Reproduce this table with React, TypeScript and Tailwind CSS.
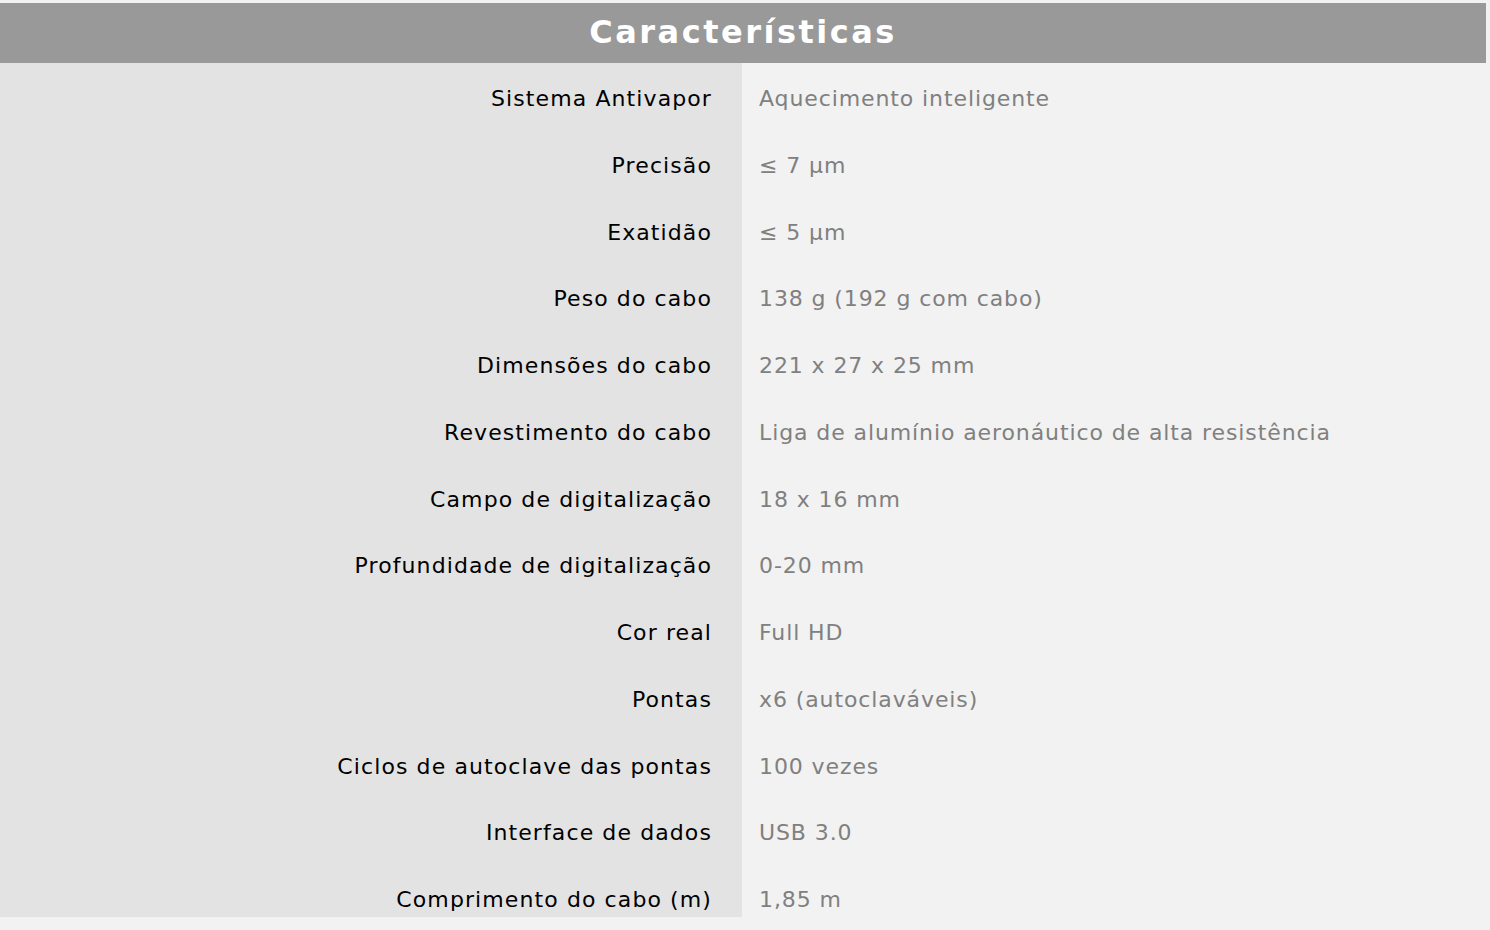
export default function App() {
  const specs = [
    { label: "Sistema Antivapor", value: "Aquecimento inteligente" },
    { label: "Precisão", value: "≤ 7 μm" },
    { label: "Exatidão", value: "≤ 5 μm" },
    { label: "Peso do cabo", value: "138 g (192 g com cabo)" },
    { label: "Dimensões do cabo", value: "221 x 27 x 25 mm" },
    { label: "Revestimento do cabo", value: "Liga de alumínio aeronáutico de alta resistência" },
    { label: "Campo de digitalização", value: "18 x 16 mm" },
    { label: "Profundidade de digitalização", value: "0-20 mm" },
    { label: "Cor real", value: "Full HD" },
    { label: "Pontas", value: "x6 (autoclaváveis)" },
    { label: "Ciclos de autoclave das pontas", value: "100 vezes" },
    { label: "Interface de dados", value: "USB 3.0" },
    { label: "Comprimento do cabo (m)", value: "1,85 m" },
  ];

  return (
    <div className="min-h-[930px] w-[1490px] bg-[#f2f2f2] pt-[3px] font-['DejaVu_Sans',sans-serif]">
      {/* Header */}
      <div className="mr-[4px] flex h-[60px] items-center justify-center bg-[#999999] pb-[2px]">
        <h2 className="text-[32px] font-bold tracking-[2.5px] text-white">Características</h2>
      </div>

      {/* Spec rows */}
      <div className="grid grid-cols-[742px_1fr]">
        {specs.map((s, i) => {
          const last = i === specs.length - 1;
          return (
            <div key={s.label} className="contents">
              <div
                className={`bg-[#e3e3e3] pr-[30px] pt-[24px] text-right text-[22px] leading-6 tracking-[1.1px] text-black ${
                  last ? "h-[53px]" : "h-[66.75px]"
                }`}
              >
                {s.label}
              </div>
              <div
                className={`pl-[17px] pt-[24px] text-[22px] leading-6 tracking-[0.9px] text-[#808080] ${
                  last ? "h-[53px]" : "h-[66.75px]"
                }`}
              >
                {s.value}
              </div>
            </div>
          );
        })}
      </div>
    </div>
  );
}
